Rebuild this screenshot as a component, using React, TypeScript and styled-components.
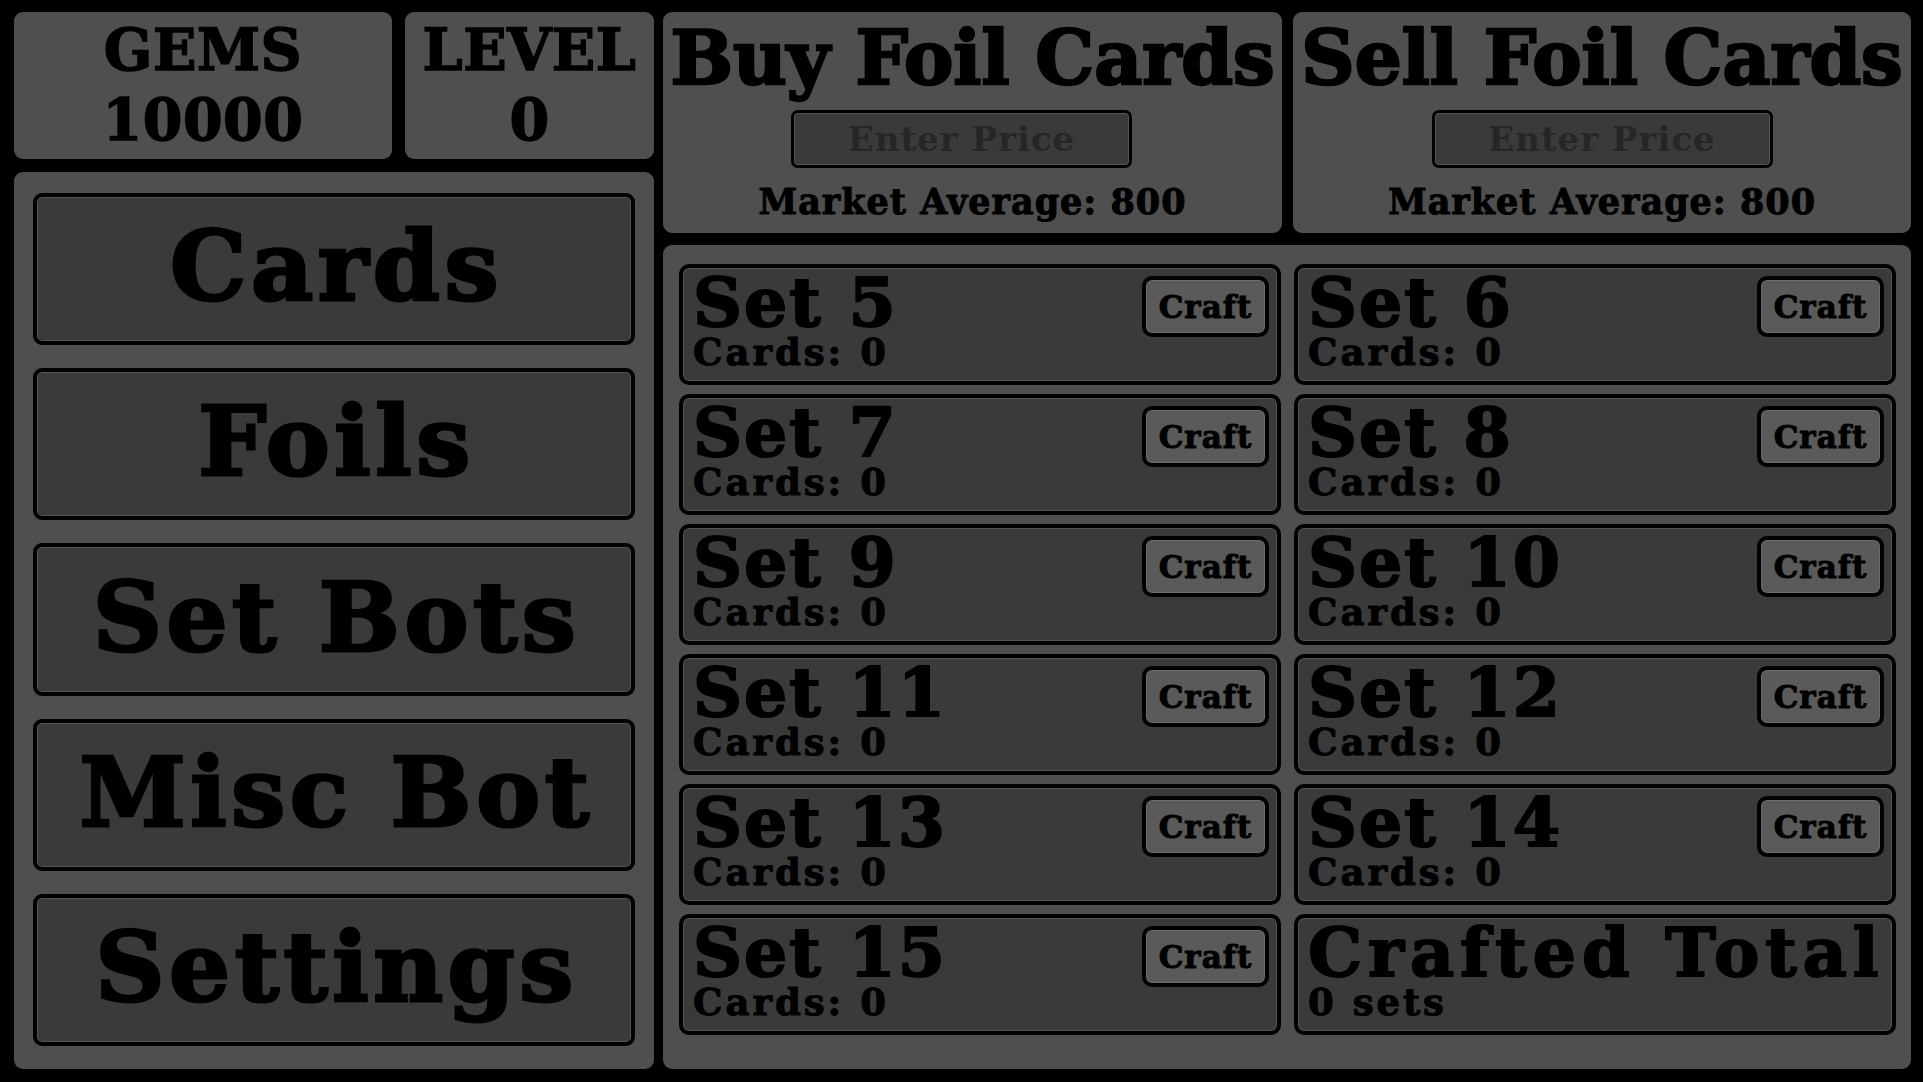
import React from "react";
import styled, { createGlobalStyle } from "styled-components";

const GlobalStyle = createGlobalStyle`
  html, body {
    margin: 0;
    padding: 0;
    background: #000;
  }
  body {
    font-family: "DejaVu Serif", "Liberation Serif", serif;
    font-weight: bold;
    color: #000;
  }
`;

const Page = styled.div`
  width: 1923px;
  height: 1082px;
  box-sizing: border-box;
  padding: 12px 12px 13px 14px;
  display: grid;
  grid-template-columns: 640px 1248px;
  column-gap: 9px;
  background: #000;
  overflow: hidden;
`;

const LeftColumn = styled.div`
  display: grid;
  grid-template-rows: 147px 1fr;
  row-gap: 13px;
  min-height: 0;
`;

const RightColumn = styled.div`
  display: grid;
  grid-template-rows: 221px 1fr;
  row-gap: 12px;
  min-height: 0;
`;

const StatsRow = styled.div`
  display: grid;
  grid-template-columns: 378px 249px;
  column-gap: 13px;
`;

const Panel = styled.div`
  background: #4f4f4f;
  border-radius: 9px;
  box-sizing: border-box;
`;

const StatBox = styled(Panel)`
  display: flex;
  flex-direction: column;
  align-items: center;
  padding-top: 9px;
  gap: 12px;
`;

const StatLabel = styled.div`
  font-size: 57px;
  line-height: 58px;
  -webkit-text-stroke: 1.5px #000;
  letter-spacing: 0.5px;
`;

const NavPanel = styled(Panel)`
  display: flex;
  flex-direction: column;
  gap: 23px;
  padding: 21px 19px 23px;
`;

const NavButton = styled.button`
  flex: 1;
  background: #3a3a3a;
  border: 4px solid #000;
  border-radius: 9px;
  box-shadow: inset 0 0 0 1px #555;
  font-family: inherit;
  font-weight: bold;
  font-size: 96px;
  line-height: 1;
  letter-spacing: 4.5px;
  color: #000;
  -webkit-text-stroke: 3px #000;
  padding: 0 0 4px 5px;
  cursor: pointer;
`;

const MarketRow = styled.div`
  display: grid;
  grid-template-columns: 619px 618px;
  column-gap: 11px;
`;

const MarketBox = styled(Panel)`
  display: flex;
  flex-direction: column;
  align-items: center;
  padding-top: 5px;
  overflow: hidden;
`;

const MarketTitle = styled.div`
  font-size: 74px;
  line-height: 82px;
  white-space: nowrap;
  -webkit-text-stroke: 2.5px #000;
`;

const PriceInput = styled.input`
  width: 341px;
  height: 58px;
  box-sizing: border-box;
  margin-top: 11px;
  margin-right: ${p => (p.$shift ? "22px" : "0")};
  background: #3a3a3a;
  border: 3px solid #000;
  border-radius: 7px;
  box-shadow: inset 0 0 0 1px #555;
  font-family: inherit;
  font-weight: bold;
  font-size: 34px;
  letter-spacing: 1px;
  text-align: center;
  color: #000;
  outline: none;
  &::placeholder {
    color: #262626;
  }
`;

const MarketAverage = styled.div`
  margin-top: 14px;
  font-size: 35px;
  line-height: 40px;
  letter-spacing: 1px;
  -webkit-text-stroke: 1px #000;
`;

const SetsPanel = styled(Panel)`
  display: grid;
  grid-template-columns: 1fr 1fr;
  grid-auto-rows: 121px;
  align-content: start;
  column-gap: 13px;
  row-gap: 9px;
  padding: 19px 15px 0 16px;
`;

const SetCard = styled.div`
  display: flex;
  justify-content: space-between;
  align-items: flex-start;
  background: #3a3a3a;
  border: 4px solid #000;
  border-radius: 10px;
  box-shadow: inset 0 0 0 1px #555;
  padding: 0 8px 0 10px;
  overflow: hidden;
`;

const SetInfo = styled.div`
  display: flex;
  flex-direction: column;
`;

const SetTitle = styled.div`
  font-size: 68px;
  line-height: 66px;
  margin-top: 1px;
  white-space: nowrap;
  letter-spacing: ${p => (p.$wide ? "6px" : "2px")};
  -webkit-text-stroke: 2px #000;
`;

const SetCount = styled.div`
  font-size: 37px;
  line-height: 34px;
  letter-spacing: 3px;
  -webkit-text-stroke: 1px #000;
`;

const CraftButton = styled.button`
  margin-top: 8px;
  width: 127px;
  height: 61px;
  background: #5a5a5a;
  border: 4px solid #000;
  border-radius: 10px;
  box-shadow: inset 0 0 0 1px #6c6c6c;
  font-family: inherit;
  font-weight: bold;
  font-size: 31px;
  letter-spacing: 1px;
  color: #000;
  -webkit-text-stroke: 1px #000;
  padding: 0;
  cursor: pointer;
`;

const navItems = ["Cards", "Foils", "Set Bots", "Misc Bot", "Settings"];
const sets = [5, 6, 7, 8, 9, 10, 11, 12, 13, 14, 15];

export default function App() {
  return (
    <>
      <GlobalStyle />
      <Page>
        <LeftColumn>
          <StatsRow>
            <StatBox>
              <StatLabel>GEMS</StatLabel>
              <StatLabel>10000</StatLabel>
            </StatBox>
            <StatBox>
              <StatLabel>LEVEL</StatLabel>
              <StatLabel>0</StatLabel>
            </StatBox>
          </StatsRow>
          <NavPanel>
            {navItems.map(item => (
              <NavButton key={item}>{item}</NavButton>
            ))}
          </NavPanel>
        </LeftColumn>
        <RightColumn>
          <MarketRow>
            <MarketBox>
              <MarketTitle>Buy Foil Cards</MarketTitle>
              <PriceInput placeholder="Enter Price" $shift />
              <MarketAverage>Market Average: 800</MarketAverage>
            </MarketBox>
            <MarketBox>
              <MarketTitle>Sell Foil Cards</MarketTitle>
              <PriceInput placeholder="Enter Price" />
              <MarketAverage>Market Average: 800</MarketAverage>
            </MarketBox>
          </MarketRow>
          <SetsPanel>
            {sets.map(n => (
              <SetCard key={n}>
                <SetInfo>
                  <SetTitle>Set {n}</SetTitle>
                  <SetCount>Cards: 0</SetCount>
                </SetInfo>
                <CraftButton>Craft</CraftButton>
              </SetCard>
            ))}
            <SetCard>
              <SetInfo>
                <SetTitle $wide>Crafted Total</SetTitle>
                <SetCount>0 sets</SetCount>
              </SetInfo>
            </SetCard>
          </SetsPanel>
        </RightColumn>
      </Page>
    </>
  );
}
